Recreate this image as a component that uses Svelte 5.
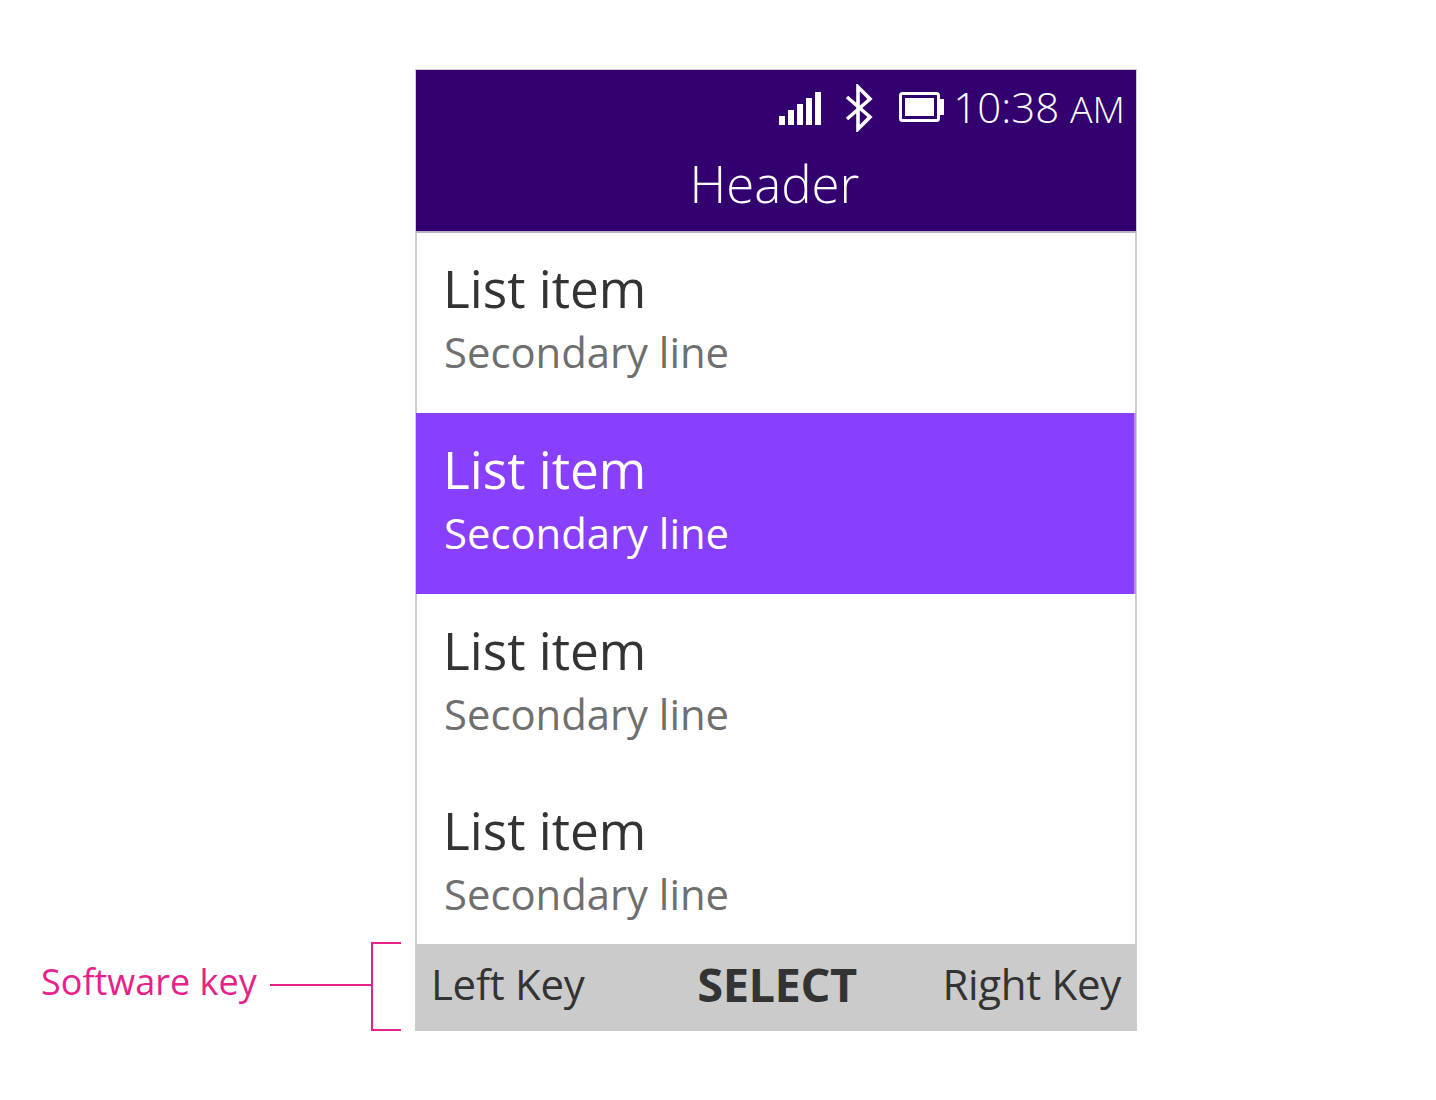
<script>
  const items = [
    { title: 'List item', sub: 'Secondary line', active: false },
    { title: 'List item', sub: 'Secondary line', active: true },
    { title: 'List item', sub: 'Secondary line', active: false },
    { title: 'List item', sub: 'Secondary line', active: false }
  ];
</script>

<main class="page">
  <section class="phone">
    <header class="header">
      <div class="status">
        <svg class="signal" width="43" height="34" viewBox="0 0 43 34" fill="#fff">
          <rect x="0" y="24" width="6" height="9" />
          <rect x="9" y="18" width="6" height="15" />
          <rect x="18" y="12" width="6" height="21" />
          <rect x="27" y="6" width="6" height="27" />
          <rect x="36" y="0" width="6" height="33" />
        </svg>
        <svg class="bt" width="28" height="48" viewBox="0 0 28 48" fill="none" stroke="#fff" stroke-width="3.6">
          <path d="M2 13 L25 33 L13 45 V3 L25 15 L2 35" />
        </svg>
        <svg class="battery" width="45" height="30" viewBox="0 0 45 30">
          <rect x="1.5" y="1.5" width="38" height="27" rx="2" fill="none" stroke="#fff" stroke-width="3" />
          <rect x="6" y="6" width="29" height="18" fill="#fff" />
          <rect x="41" y="7" width="4" height="16" fill="#fff" />
        </svg>
        <span class="time">10:38 <small>AM</small></span>
      </div>
      <h1>Header</h1>
    </header>

    <ul class="list">
      {#each items as item}
        <li class:active={item.active}>
          <div class="title">{item.title}</div>
          <div class="sub">{item.sub}</div>
        </li>
      {/each}
    </ul>

    <footer class="softkeys">
      <span>Left Key</span>
      <strong>SELECT</strong>
      <span>Right Key</span>
    </footer>
  </section>

  <div class="note">
    <span class="note-label">Software key</span>
    <span class="note-line"></span>
    <span class="note-bracket"></span>
  </div>
</main>

<style>
  :global(body) {
    margin: 0;
    background: #fff;
  }

  .page {
    position: relative;
    height: 1100px;
    padding: 69px 0 0 415px;
    box-sizing: border-box;
    font-family: "Open Sans", sans-serif;
  }

  .phone {
    width: 722px;
    height: 962px;
    box-sizing: border-box;
    display: flex;
    flex-direction: column;
    border: solid #cbcbcb;
    border-width: 1px 2px 0 2px;
  }

  .header {
    position: relative;
    height: 163px;
    flex: none;
    box-sizing: border-box;
    margin: 0 -1px -1px -1px;
    border-bottom: 2px solid #b9b4c4;
    background: #33006f;
    color: #fff;
    display: flex;
    flex-direction: column;
  }

  .status {
    height: 76px;
    padding-right: 11px;
    display: flex;
    align-items: center;
    justify-content: flex-end;
  }

  .signal { margin-right: 23px; margin-top: 1px; }
  .bt { margin-right: 26px; margin-top: -1px; }
  .battery { margin-right: 9px; margin-top: -2px; }

  .time {
    font-size: 42px;
    font-weight: 300;
    line-height: 1;
    margin-top: -2px;
  }

  .time small {
    font-size: 37.5px;
    font-weight: 300;
  }

  h1 {
    margin: 0;
    padding: 5px 3px 0 0;
    font-size: 51px;
    font-weight: 300;
    line-height: 64px;
    text-align: center;
  }

  .list {
    flex: 1;
    margin: 0;
    padding: 0;
    list-style: none;
    min-height: 0;
  }

  li {
    height: 180.8px;
    box-sizing: border-box;
    padding: 23px 0 0 27px;
    color: #333;
  }

  li.active {
    margin: 0 -1px;
    padding-left: 28px;
    background: #883ffe;
    border-right: 2px solid #b98dff;
    color: #fff;
  }

  .title {
    margin-left: -1px;
    font-size: 51.3px;
    font-weight: 400;
    line-height: 66px;
  }

  .sub {
    margin-top: 1px;
    font-size: 41.8px;
    line-height: 60px;
    font-weight: 400;
    color: #6f6f6f;
  }

  li.active .sub { color: #fff; }

  .softkeys {
    height: 87px;
    flex: none;
    margin: 0 -2px;
    padding: 0 16px 8px 16px;
    box-sizing: border-box;
    background: #cbcbcb;
    color: #333;
    display: grid;
    grid-template-columns: 1fr auto 1fr;
    align-items: center;
    font-size: 42px;
    letter-spacing: -0.3px;
  }

  .softkeys strong {
    margin-left: 2px;
    font-size: 47px;
    font-weight: 700;
    letter-spacing: -0.5px;
  }

  .softkeys span:last-child { text-align: right; }

  .note {
    position: absolute;
    left: 41px;
    top: 942px;
    width: 360px;
    height: 89px;
    color: #e6228a;
  }

  .note-label {
    position: absolute;
    left: 0;
    top: 16px;
    font-size: 36px;
    line-height: 48px;
  }

  .note-line {
    position: absolute;
    left: 229px;
    top: 42px;
    width: 102px;
    height: 2px;
    background: #e6228a;
  }

  .note-bracket {
    position: absolute;
    left: 330px;
    top: 0;
    width: 28px;
    height: 85px;
    border: 2px solid #e6228a;
    border-right: 0;
  }
</style>
